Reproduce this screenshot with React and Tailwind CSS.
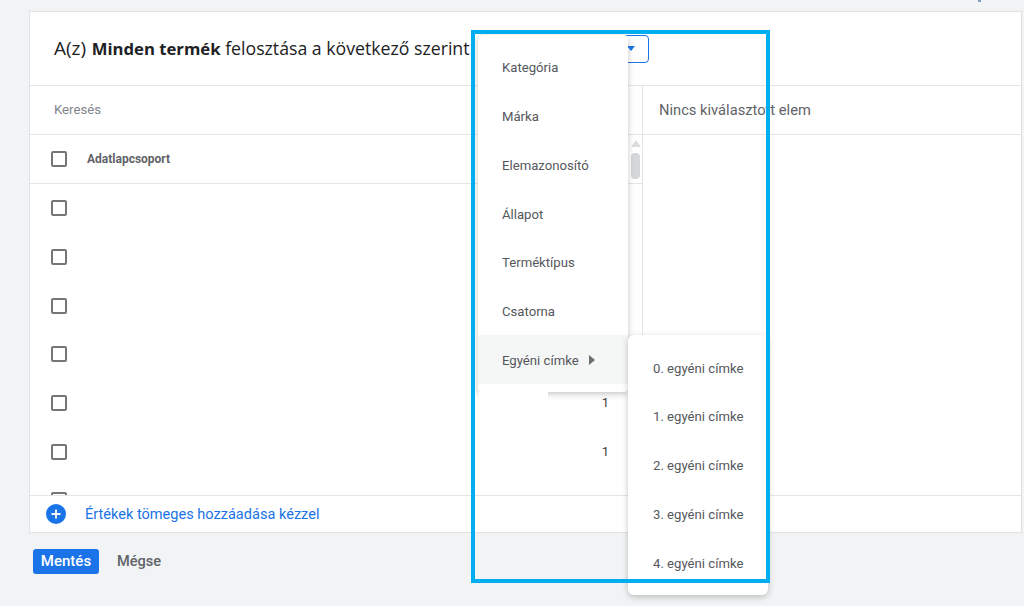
const rows = ['1', '1', '1', '1', '1', '1', ''];
const menuItems = ['Kategória', 'Márka', 'Elemazonosító', 'Állapot', 'Terméktípus', 'Csatorna'];
const labelItems = ['0. egyéni címke', '1. egyéni címke', '2. egyéni címke', '3. egyéni címke', '4. egyéni címke'];

const Checkbox = () => (
  <div className="w-[16px] h-[16px] shrink-0 rounded-[2px] border-2 border-[#747678] bg-white"></div>
);

export default function App() {
  return (
    <div className="relative w-[1024px] h-[606px] overflow-hidden bg-[#f1f3f4] font-['Roboto',sans-serif]">
      <div className="pl-[29px] pt-[11px]">
        {/* Kártya */}
        <div className="w-[993px] h-[522px] flex flex-col bg-white border border-[#e0e2e4]">
          <div className="h-[74px] shrink-0 flex items-center pl-[24px] border-b border-[#e4e5e7]">
            <span className="font-['Open_Sans',sans-serif] text-[17.7px] text-[#202124] whitespace-nowrap">
              <span className="mr-[1px] text-[19px]">A(z)</span> <b className="font-bold text-[16.7px]">Minden termék</b> felosztása a következő szerint
            </span>
            <div className="ml-[8px] w-[171px] h-[28px] flex items-center justify-end pr-[13px] border border-[#1a73e8] rounded-[4px]">
              <div className="w-0 h-0 border-l-[4px] border-r-[4px] border-t-[5px] border-l-transparent border-r-transparent border-t-[#1a73e8]"></div>
            </div>
          </div>

          <div className="flex-1 flex min-h-0">
            {/* Bal oldali lista */}
            <div className="w-[613px] shrink-0 flex flex-col min-h-0 border-r border-[#e4e5e7] relative">
              <div className="h-[49px] shrink-0 flex items-center pl-[24px] text-[13.2px] text-[#80868b] border-b border-[#e4e5e7]">
                Keresés
              </div>
              <div className="h-[49px] shrink-0 flex items-center pl-[21px] gap-[20px] border-b border-[#e4e5e7]">
                <Checkbox />
                <span className="text-[12px] font-bold text-[#5f6368]">Adatlapcsoport</span>
              </div>
              <div className="flex-1 min-h-0 overflow-hidden">
                {rows.map((value, i) => (
                  <div key={i} className="h-[48.7px] flex items-center justify-between pl-[21px] pr-[33px]">
                    <Checkbox />
                    <span className="text-[13px] text-[#3c4043]">{value}</span>
                  </div>
                ))}
              </div>
              {/* Görgetősáv */}
              <div className="absolute right-[1px] top-[54px] w-[11px] flex flex-col items-center gap-[6px]">
                <div className="w-0 h-0 border-l-[5.5px] border-r-[5.5px] border-b-[7px] border-l-transparent border-r-transparent border-b-[#dadce0]"></div>
                <div className="w-[9px] h-[26px] rounded-[4px] bg-[#d5d7da]"></div>
              </div>
            </div>

            {/* Jobb oldali panel */}
            <div className="flex-1">
              <div className="h-[49px] flex items-center pl-[16px] text-[14.7px] text-[#5f6368] border-b border-[#e4e5e7]">
                Nincs kiválasztott elem
              </div>
            </div>
          </div>

          <div className="h-[37px] shrink-0 flex items-center pl-[16px] gap-[19px] border-t border-[#e4e5e7]">
            <div className="w-[20px] h-[20px] rounded-full bg-[#1a73e8] flex items-center justify-center">
              <svg width="12" height="12" viewBox="0 0 12 12">
                <path d="M6 1.5v9M1.5 6h9" stroke="#fff" strokeWidth="1.8" />
              </svg>
            </div>
            <span className="pt-[2px] text-[14.55px] text-[#1a73e8]">Értékek tömeges hozzáadása kézzel</span>
          </div>
        </div>

        {/* Gombok */}
        <div className="flex items-center mt-[16px] ml-[4px] gap-[18px]">
          <button className="w-[66px] h-[25px] rounded-[3px] bg-[#1a73e8] text-[15px] font-medium text-white">Mentés</button>
          <button className="text-[14.6px] font-medium text-[#5f6368]">Mégse</button>
        </div>
      </div>

      {/* Legördülő menü */}
      <div className="absolute left-[478px] top-[35px] w-[150px] py-[8px] bg-white rounded-[4px] shadow-[0_2px_6px_rgba(60,64,67,0.3)]">
        {menuItems.map((item) => (
          <div key={item} className="h-[48.7px] flex items-center pl-[24px] pt-[2px] text-[13.15px] text-[#55585c]">{item}</div>
        ))}
        <div className="h-[48.7px] flex items-center pl-[24px] pt-[2px] gap-[10px] bg-[#f5f6f6] text-[13.15px] text-[#55585c]">
          Egyéni címke
          <div className="w-0 h-0 border-t-[5px] border-b-[5px] border-l-[6px] border-t-transparent border-b-transparent border-l-[#6b6f73]"></div>
        </div>
      </div>
      <div className="absolute left-[479px] top-[392px] w-[69px] h-[9px] bg-white"></div>

      {/* Almenü */}
      <div className="absolute left-[628px] top-[335px] w-[140px] pt-[9px] pb-[7px] bg-white rounded-[6px] shadow-[0_2px_6px_rgba(60,64,67,0.3)]">
        {labelItems.map((item) => (
          <div key={item} className="h-[48.8px] flex items-center pl-[25px] text-[13.15px] text-[#55585c]">{item}</div>
        ))}
      </div>

      {/* Kiemelő keret */}
      <div className="absolute left-[471px] top-[30px] w-[299px] h-[553px] border-[4px] border-[#00adef]"></div>

      <div className="absolute left-[978px] top-0 w-[3px] h-[2px] bg-[#7f9fc9]"></div>
    </div>
  );
}
